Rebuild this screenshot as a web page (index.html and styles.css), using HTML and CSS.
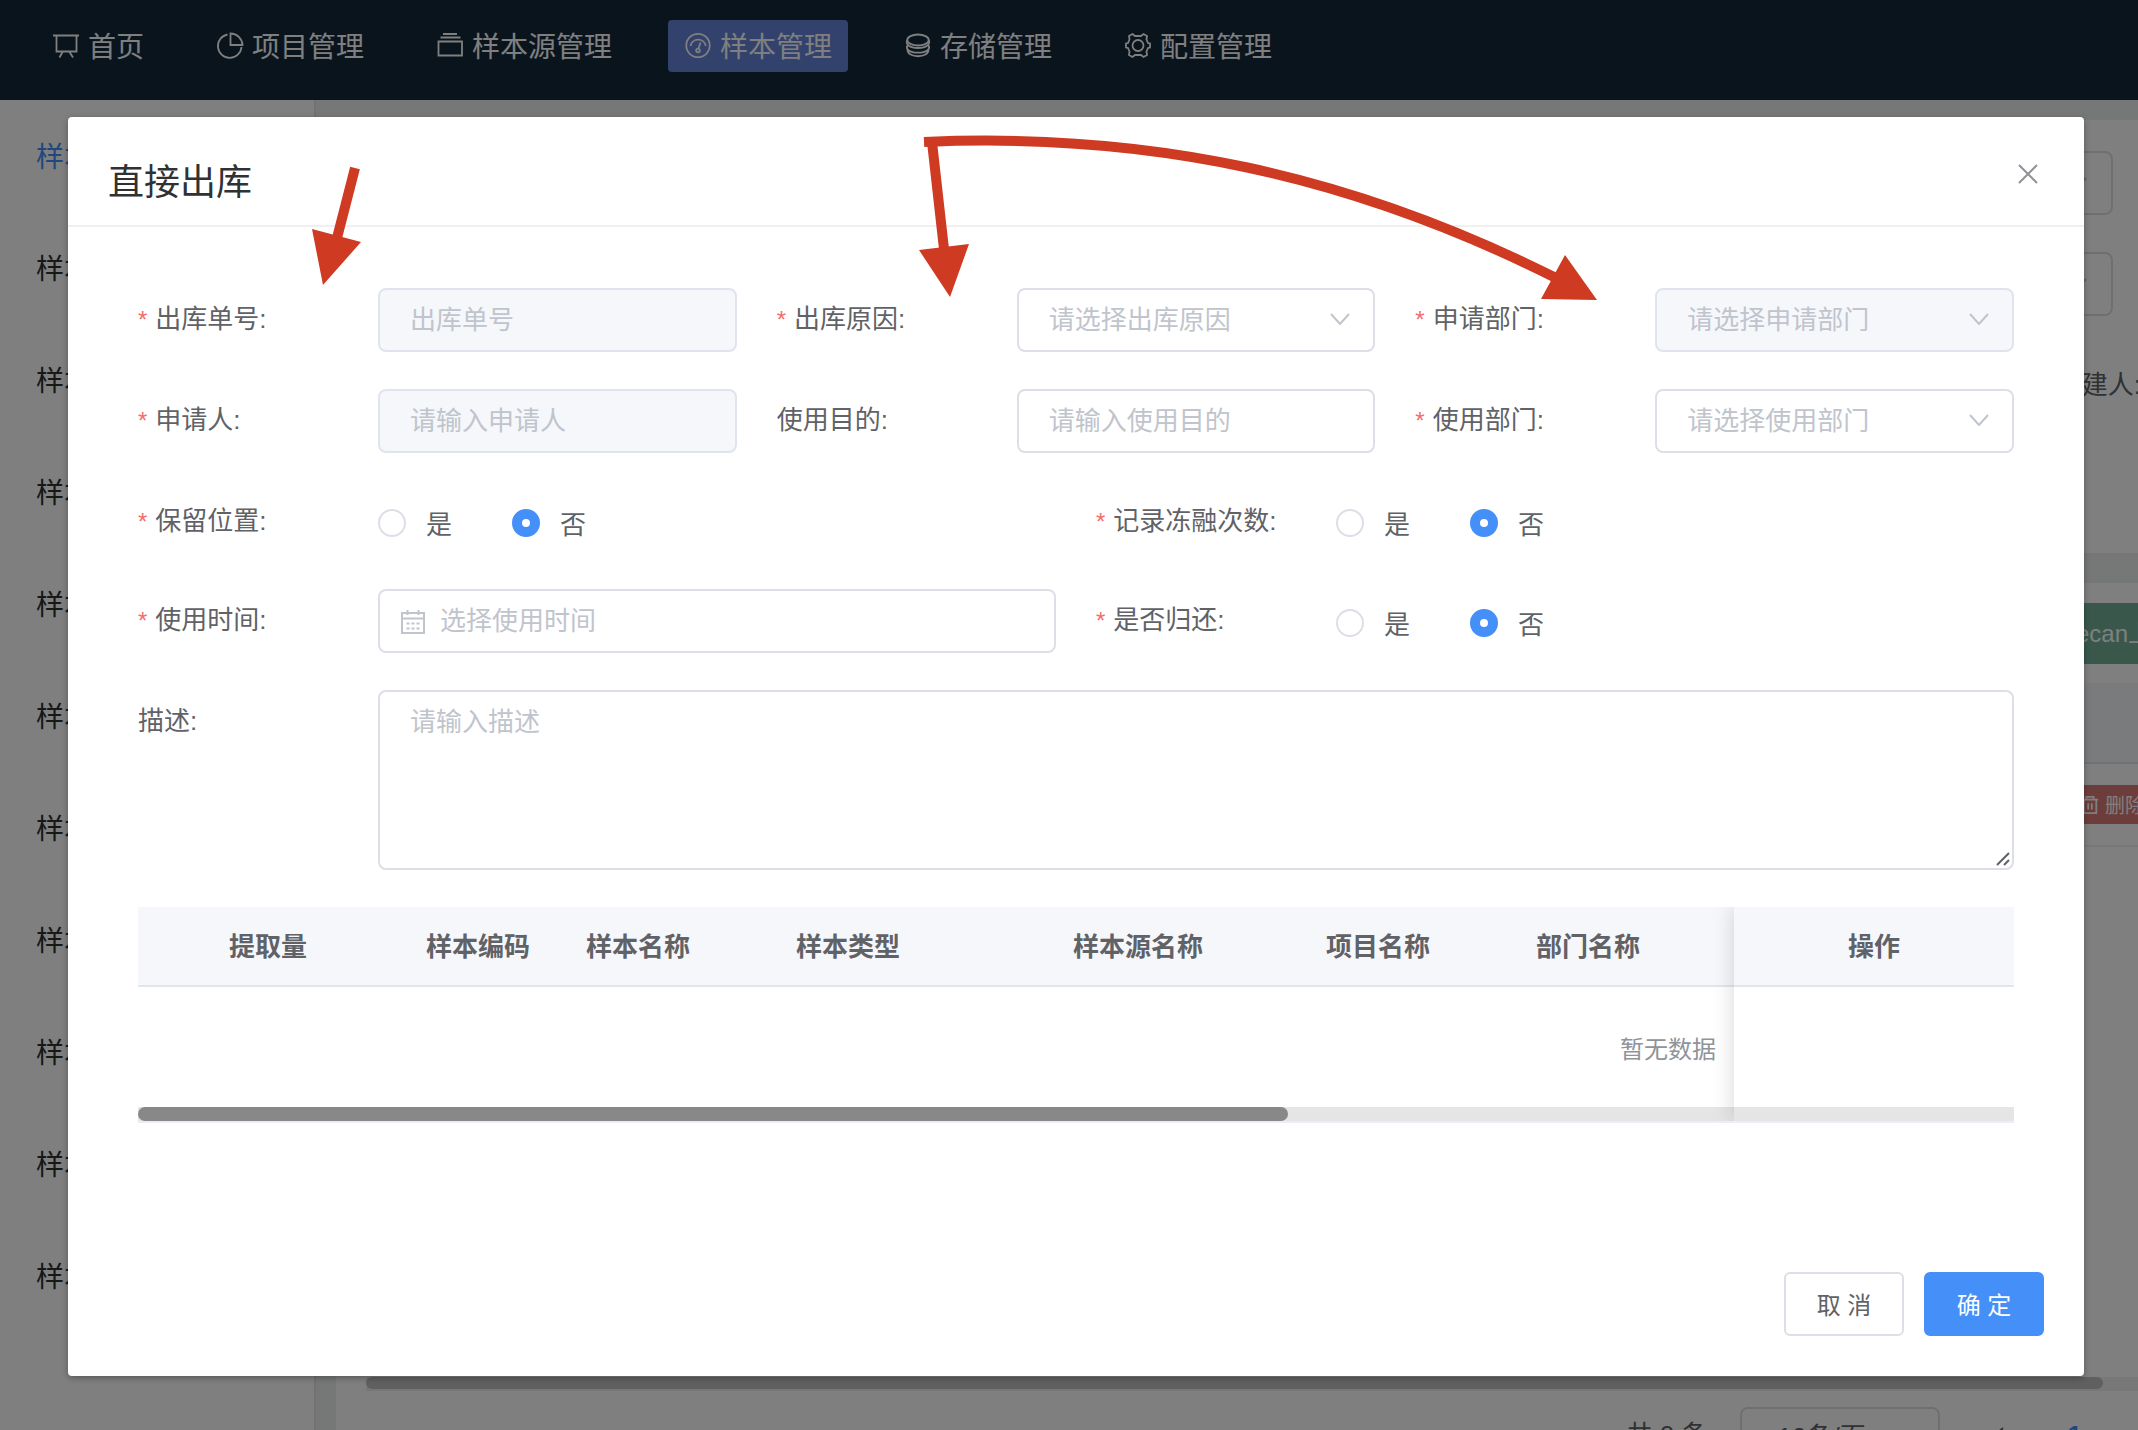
FILE: index.html
```html
<!DOCTYPE html>
<html lang="zh-CN">
<head>
<meta charset="utf-8">
<title>直接出库</title>
<link rel="stylesheet" href="styles.css">
</head>
<body>
<div class="app">
  <nav class="topnav">
    <a class="nav-item" href="#"><svg class="icon" viewBox="0 0 28 28"><path d="M1 4.500H27M4.500 4.500V20.500H24.500V4.500M10.500 21L7.500 26.500M17.500 21L21 26.500"/></svg>首页</a>
    <a class="nav-item" href="#"><svg class="icon" viewBox="0 0 28 28"><path d="M11.500 3.500A11.800 11.800 0 1 0 25.500 16M14.500 2.500V14H26.500A12 12 0 0 0 14.500 2.500Z"/></svg>项目管理</a>
    <a class="nav-item" href="#"><svg class="icon" viewBox="0 0 28 28"><path d="M7 3H21M4.500 6.500H24.500M2.500 10.500H26V24.500H2.500Z"/></svg>样本源管理</a>
    <a class="nav-item nav-active" href="#"><svg class="icon" viewBox="0 0 28 28"><circle cx="14" cy="14.500" r="11.700"/><path d="M6.500 15A7.800 7.800 0 0 1 21.800 15M16.500 11.500L14.500 17.500"/><circle cx="14" cy="19.500" r="1.800"/></svg>样本管理</a>
    <a class="nav-item" href="#"><svg class="icon" viewBox="0 0 28 28"><ellipse cx="14" cy="9" rx="10.700" ry="5.500"/><path d="M3.300 9C2.300 11 2.800 13 4.500 14.500C9 17.800 19 17.800 23.500 14.500C25.200 13 25.700 11 24.700 9M3.800 14C2.300 16 3 18 4.500 19.200C9 22.500 19 22.500 23.500 19.200C25 18 25.700 16 24.200 14M3.500 18.500C3 27.500 25 27.500 24.500 18.500"/></svg>存储管理</a>
    <a class="nav-item" href="#"><svg class="icon" viewBox="0 0 28 28"><circle cx="14" cy="14.500" r="5.500"/><path d="M8.500 3L11 5H17L19.500 3L23 5L22.500 8.500L24 12L26 12.500V16.500L24 17L22.500 20.500L23 24L19.500 26L17 24H11L8.500 26L5 24L5.500 20.500L4 17L2 16.500V12.500L4 12L5.500 8.500L5 5Z"/></svg>配置管理</a>
  </nav>
  <div class="page">
    <aside class="sidebar">
      <a class="side-item side-active" href="#">样本</a>
      <a class="side-item" href="#">样本</a>
      <a class="side-item" href="#">样本</a>
      <a class="side-item" href="#">样本</a>
      <a class="side-item" href="#">样本</a>
      <a class="side-item" href="#">样本</a>
      <a class="side-item" href="#">样本</a>
      <a class="side-item" href="#">样本</a>
      <a class="side-item" href="#">样本</a>
      <a class="side-item" href="#">样本</a>
      <a class="side-item" href="#">样本</a>
    </aside>
    <main class="main">
      <section class="filters">
        <div class="ghost-select"><svg class="chevron" viewBox="0 0 20 12"><path d="M1 1L10 11L19 1"/></svg></div>
        <div class="ghost-select"><svg class="chevron" viewBox="0 0 20 12"><path d="M1 1L10 11L19 1"/></svg></div>
        <div class="creator">建人:</div>
      </section>
      <section class="results">
        <div class="toolbar"><button class="green-button" type="button">Tecan上</button></div>
        <div class="list-head"></div>
        <div class="list-row"><button class="red-button" type="button"><svg class="trash" viewBox="0 0 20 20"><path d="M1 4H19M6 4V1H14V4M3 4V19H17V4M8 8V15M12 8V15"/></svg>删除</button></div>
        <div class="list-space"></div>
        <div class="page-scroll"><div class="page-thumb"></div></div>
        <div class="pager">
          <span>共 0 条</span>
          <div class="page-size">10条/页</div>
          <svg class="prev" viewBox="0 0 12 20"><path d="M11 1L1 10L11 19"/></svg>
          <a class="page-number" href="#">1</a>
        </div>
      </section>
    </main>
  </div>
</div>

<div class="overlay">
  <div class="dialog" role="dialog" aria-labelledby="dialog-title">
    <header class="dialog-head">
      <h1 class="dialog-title" id="dialog-title">直接出库</h1>
      <button class="close" type="button" aria-label="关闭"><svg viewBox="0 0 20 20"><path d="M1 1L19 19M19 1L1 19"/></svg></button>
    </header>
    <form class="dialog-body">
      <div class="row thirds">
        <div class="field"><label class="label required" for="order">出库单号:</label><input class="control" id="order" type="text" placeholder="出库单号" disabled></div>
        <div class="field"><label class="label required" for="reason">出库原因:</label><div class="select-box"><select class="control" id="reason"><option>请选择出库原因</option></select><svg class="chevron" viewBox="0 0 20 12"><path d="M1 1L10 11L19 1"/></svg></div></div>
        <div class="field"><label class="label required" for="apply-dept">申请部门:</label><div class="select-box"><select class="control" id="apply-dept" disabled><option>请选择申请部门</option></select><svg class="chevron" viewBox="0 0 20 12"><path d="M1 1L10 11L19 1"/></svg></div></div>
      </div>
      <div class="row thirds">
        <div class="field"><label class="label required" for="applicant">申请人:</label><input class="control" id="applicant" type="text" placeholder="请输入申请人" disabled></div>
        <div class="field"><label class="label" for="purpose">使用目的:</label><input class="control" id="purpose" type="text" placeholder="请输入使用目的"></div>
        <div class="field"><label class="label required" for="use-dept">使用部门:</label><div class="select-box"><select class="control" id="use-dept"><option>请选择使用部门</option></select><svg class="chevron" viewBox="0 0 20 12"><path d="M1 1L10 11L19 1"/></svg></div></div>
      </div>
      <div class="row halves radio-row">
        <div class="field" role="radiogroup" aria-labelledby="keep-label"><span class="label required" id="keep-label">保留位置:</span>
          <div class="radios"><label class="radio"><input type="radio" name="keep"><span>是</span></label><label class="radio"><input type="radio" name="keep" checked><span>否</span></label></div></div>
        <div class="field" role="radiogroup" aria-labelledby="thaw-label"><span class="label required" id="thaw-label">记录冻融次数:</span>
          <div class="radios"><label class="radio"><input type="radio" name="thaw"><span>是</span></label><label class="radio"><input type="radio" name="thaw" checked><span>否</span></label></div></div>
      </div>
      <div class="row halves">
        <div class="field"><label class="label required" for="use-time">使用时间:</label>
          <div class="date-box"><input class="control" id="use-time" type="text" placeholder="选择使用时间"><svg class="calendar" viewBox="0 0 24 24"><path d="M1 3H23V23H1ZM1 8.500H23M6.500 0V5M17.500 0V5"/><path stroke-dasharray="3 2" d="M5.500 13.500H19M5.500 18.500H19"/></svg></div></div>
        <div class="field" role="radiogroup" aria-labelledby="return-label"><span class="label required" id="return-label">是否归还:</span>
          <div class="radios"><label class="radio"><input type="radio" name="return"><span>是</span></label><label class="radio"><input type="radio" name="return" checked><span>否</span></label></div></div>
      </div>
      <div class="row">
        <div class="field"><label class="label" for="desc">描述:</label>
          <div class="text-box"><textarea class="control" id="desc" placeholder="请输入描述"></textarea><svg class="grip" viewBox="0 0 14 14"><path d="M1 13L13 1M8 13L13 8"/></svg></div></div>
      </div>
      <div class="table-box">
        <div class="table-view">
          <table class="samples">
            <colgroup><col class="w260"><col class="w160"><col class="w160"><col class="w260"><col class="w320"><col class="w160"><col class="w260"><col></colgroup>
            <thead><tr><th>提取量</th><th>样本编码</th><th>样本名称</th><th>样本类型</th><th>样本源名称</th><th>项目名称</th><th>部门名称</th><th></th></tr></thead>
            <tbody><tr><td class="empty" colspan="8">暂无数据</td></tr></tbody>
          </table>
        </div>
        <div class="fixed-column"><table class="actions"><thead><tr><th>操作</th></tr></thead></table></div>
        <div class="scroll-track"><div class="scroll-thumb"></div></div>
      </div>
    </form>
    <footer class="dialog-foot">
      <button class="button" type="button">取 消</button>
      <button class="button primary" type="button">确 定</button>
    </footer>
  </div>
</div>

<svg class="annotations" width="1700" height="320" viewBox="0 0 1700 320">
  <path class="shaft" d="M355 168L337 238M932 142L944 249"/>
  <path class="arc" d="M924 142C1150 132 1350 175 1554 277"/>
  <path class="head" d="M312 229L361 242L323 285ZM919 250L969 244L950 297ZM1565 255L1541 299L1597 300Z"/>
</svg>
</body>
</html>
```
FILE: styles.css
```css
* { box-sizing: border-box; }

body {
  margin: 0;
  height: 100vh;
  overflow: hidden;
  position: relative;
  font-family: "Liberation Sans", "Noto Sans CJK SC", sans-serif;
  font-size: 26px;
  color: #606266;
}

button, input, select, textarea { font: inherit; color: inherit; margin: 0; }
a { color: inherit; text-decoration: none; }
svg { fill: none; stroke: currentColor; stroke-width: 2; flex: none; display: block; }

/* Page behind the dialog */
.app { display: flex; flex-direction: column; height: 100vh; overflow: hidden; }

.topnav {
  flex: none;
  display: flex;
  align-items: flex-start;
  gap: 40px;
  height: 100px;
  padding: 20px 36px;
  background: #14283a;
  color: #fff;
  font-size: 28px;
}
.nav-item {
  display: flex;
  align-items: center;
  gap: 8px;
  height: 52px;
  padding: 0 16px 2px;
  border-radius: 4px;
  white-space: nowrap;
}
.nav-active { background: #6682da; }
.icon { width: 28px; height: 28px; stroke-width: 1.8; }

.page { flex: 1; display: flex; min-height: 0; background: #ecf0ee; }
.sidebar {
  flex: none;
  width: 316px;
  padding-top: 2px;
  background: #fff;
  border-right: 2px solid #e0e4e2;
  font-size: 28px;
  color: #303133;
}
.side-item { display: block; height: 112px; line-height: 112px; padding-left: 36px; }
.side-active { color: #458ff8; }

.main { flex: 1; min-width: 0; display: flex; flex-direction: column; gap: 30px; padding: 20px 0 0 20px; }
.filters {
  flex: none;
  display: flex;
  flex-direction: column;
  gap: 37px;
  height: 433px;
  padding: 31px 25px 0 30px;
  background: #fff;
}
.ghost-select {
  display: flex;
  align-items: center;
  justify-content: flex-end;
  height: 64px;
  padding-right: 24px;
  border: 2px solid #dcdfe6;
  border-radius: 8px;
  color: #c0c4cc;
}
.creator { height: 64px; line-height: 64px; text-align: right; margin-right: -28px; }

.results { flex: 1; display: flex; flex-direction: column; min-height: 0; padding: 20px 0 0 30px; background: #fff; }
.toolbar { display: flex; justify-content: flex-end; height: 80px; }
.green-button {
  width: 100px;
  height: 61px;
  padding: 0 0 4px 26px;
  border: 0;
  background: #72b096;
  color: #fff;
  font-size: 24px;
  text-align: left;
  white-space: nowrap;
  overflow: hidden;
}
.list-head { flex: none; height: 81px; background: #f4f6fb; border-bottom: 2px solid #dfe5f0; }
.list-row { flex: none; display: flex; align-items: center; justify-content: flex-end; height: 83px; border-bottom: 2px solid #ebeef5; }
.red-button {
  display: flex;
  align-items: center;
  gap: 6px;
  width: 80px;
  height: 39px;
  padding: 0 0 0 23px;
  border: 0;
  background: #da7a76;
  color: #fff;
  font-size: 20px;
  white-space: nowrap;
  overflow: hidden;
}
.trash { width: 18px; height: 18px; }
.list-space { flex: 1; }
.page-scroll { flex: none; height: 14px; background: #f1f1f1; border-bottom: 2px solid #ebeef5; }
.page-thumb { width: 98%; height: 12px; border-radius: 6px; background: #c1c1c1; }
.pager {
  flex: none;
  display: flex;
  justify-content: flex-end;
  align-items: flex-start;
  height: 39px;
  padding: 16px 56px 0 0;
  line-height: 56px;
}
.page-size { width: 200px; height: 56px; margin: 0 52px 0 32px; padding-left: 36px; border: 2px solid #dcdfe6; border-radius: 8px; }
.prev { width: 12px; height: 20px; margin: 20px 64px 0 0; }
.page-number { color: #458ff8; font-weight: 700; }

/* Dialog */
.overlay { position: absolute; inset: 0; display: flex; padding: 117px 54px 54px 68px; background: rgba(0, 0, 0, 0.5); }
.dialog {
  flex: 1;
  min-width: 0;
  display: flex;
  flex-direction: column;
  background: #fff;
  border-radius: 4px;
  box-shadow: 0 2px 6px rgba(0, 0, 0, 0.3);
}
.dialog-head {
  display: flex;
  justify-content: space-between;
  align-items: flex-start;
  padding: 40px 42px 16px 40px;
  border-bottom: 2px solid #f0f0f0;
}
.dialog-title { margin: 0; font-size: 36px; font-weight: 400; line-height: 52px; color: #303133; }
.close { display: grid; place-items: center; width: 28px; height: 34px; padding: 0; border: 0; background: none; color: #909399; }
.close svg { width: 20px; height: 20px; }

.dialog-body { flex: 1; display: flex; flex-direction: column; gap: 37px; padding: 61px 70px 0; }
.row { display: grid; column-gap: 40px; }
.thirds { grid-template-columns: repeat(3, 1fr); }
.halves { grid-template-columns: repeat(2, 1fr); }
.radio-row { height: 62px; }

.field { display: flex; min-width: 0; }
.label { flex: none; width: 240px; line-height: 63px; }
.radio-row .radios { height: 62px; }
.required::before { content: "*"; margin-right: 8px; color: #f56c6c; font-size: 24px; }

.control {
  display: block;
  flex: 1;
  width: 100%;
  min-width: 0;
  height: 64px;
  padding: 0 30px;
  border: 2px solid #dcdfe6;
  border-radius: 8px;
  background: #fff;
  appearance: none;
  outline: none;
}
select.control { color: #c0c4cc; opacity: 1; }
.control::placeholder { color: #c0c4cc; opacity: 1; }
.control:disabled { background: #f5f7fb; border-color: #e0e4ee; }

.select-box, .date-box, .text-box { position: relative; flex: 1; min-width: 0; }
.chevron { width: 20px; height: 12px; color: #c0c4cc; }
.select-box .chevron { position: absolute; right: 25px; top: 25px; pointer-events: none; }
.date-box .control { padding-left: 60px; }
.calendar { position: absolute; left: 23px; top: 21px; width: 24px; height: 24px; color: #c0c4cc; }
textarea.control { height: 180px; padding: 10px 30px; line-height: 40px; resize: none; }
.grip { position: absolute; right: 4px; bottom: 4px; width: 14px; height: 14px; color: #606266; }

.radios { display: flex; gap: 60px; height: 64px; padding-top: 4px; }
.radio { display: flex; align-items: center; gap: 20px; }
.radio span { padding-bottom: 2px; }
.radio input { appearance: none; width: 28px; height: 28px; border: 2px solid #dcdfe6; border-radius: 50%; background: #fff; }
.radio input:checked { border: 10px solid #458ff8; }

.table-box { position: relative; height: 216px; border-bottom: 2px solid #ebeef5; }
.table-view { overflow: hidden; }
.samples, .actions { border-collapse: separate; border-spacing: 0; table-layout: fixed; }
.samples { width: 3060px; }
.actions { width: 100%; }
.w160 { width: 160px; }
.w260 { width: 260px; }
.w320 { width: 320px; }
th { height: 80px; padding: 0 0 4px; background: #f5f7fb; border-bottom: 2px solid #dfe6ec; font-weight: 700; }
.empty { height: 120px; padding: 0; text-align: center; font-size: 24px; color: #909399; }
.fixed-column { position: absolute; top: 0; right: 0; width: 280px; height: 214px; background: #fff; box-shadow: -1px 0 20px rgba(0, 0, 0, 0.15); clip-path: inset(0 0 0 -30px); }
.scroll-track { position: absolute; left: 0; right: 0; bottom: 0; height: 14px; background: rgba(0, 0, 0, 0.1); }
.scroll-thumb { width: 61.300%; height: 14px; border-radius: 7px; background: #888; }

.dialog-foot { display: flex; justify-content: flex-end; gap: 20px; padding: 0 40px 40px 0; }
.button { width: 120px; height: 64px; padding: 0 0 2px; border: 2px solid #dcdfe6; border-radius: 6px; background: #fff; font-size: 24px; }
.primary { background: #458ff8; border-color: #458ff8; color: #fff; }

/* Arrows drawn over the form */
.annotations { position: absolute; left: 0; top: 0; color: #cf3a22; pointer-events: none; }
.shaft, .arc { stroke-width: 10; }
.head { fill: currentColor; stroke: none; }
```
